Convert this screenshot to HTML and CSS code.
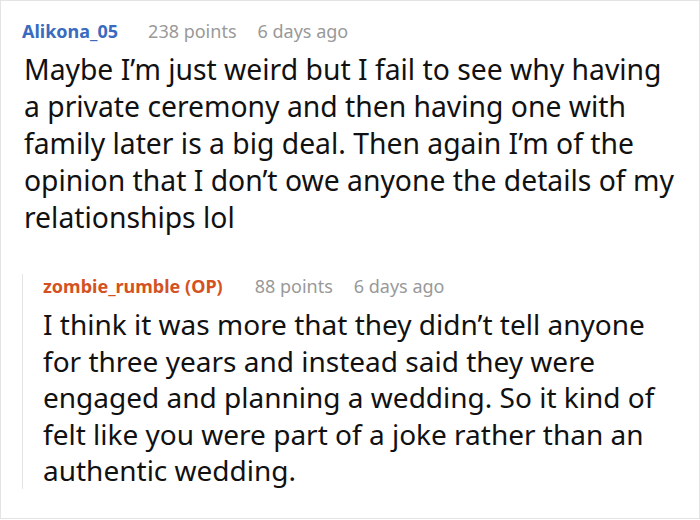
FILE: index.html
```html
<!DOCTYPE html>
<html>
<head>
<meta charset="utf-8">
<link rel="stylesheet" href="styles.css">
</head>
<body>
<div class="thread">
  <div class="comment">
    <div class="meta">
      <span class="author">Alikona_05</span>
      <span class="points">238 points</span>
      <span class="time">6 days ago</span>
    </div>
    <p class="text">Maybe I’m just weird but I fail to see why having<br>a private ceremony and then having one with<br>family later is a big deal. Then again I’m of the<br>opinion that I don’t owe anyone the details of my<br>relationships lol</p>
  </div>
  <div class="reply">
    <div class="meta">
      <span class="author op">zombie_rumble (OP)</span>
      <span class="points">88 points</span>
      <span class="time">6 days ago</span>
    </div>
    <p class="text">I think it was more that they didn’t tell anyone<br>for three years and instead said they were<br>engaged and planning a wedding. So it kind of<br>felt like you were part of a joke rather than an<br>authentic wedding.</p>
  </div>
</div>
</body>
</html>
```
FILE: styles.css
```css
html, body {
  margin: 0;
  padding: 0;
  background: #fff;
}
body {
  font-family: "Noto Sans", "Open Sans", sans-serif;
  width: 700px;
  height: 520px;
  overflow: hidden;
}
.thread {
  box-sizing: border-box;
  width: 700px;
  height: 519px;
  border: 1px solid #e4e4e4;
  padding: 18px 10px 0 21px;
}
.meta {
  display: flex;
  align-items: baseline;
  font-size: 18px;
  line-height: 24px;
  color: #999;
}
.author {
  font-weight: 700;
  color: #3a6bbf;
  margin-right: 30px;
}
.author.op {
  color: #d4521f;
  margin-right: 32px;
}
.points {
  margin-right: 21px;
}
.text {
  margin: 8px 0 0 2px;
  font-size: 28.3px;
  line-height: 37px;
  color: #111;
  white-space: nowrap;
}
.reply {
  margin-top: 38px;
  border-left: 1px solid #e4e4e4;
  padding-left: 20px;
}
.reply .text {
  margin-left: 0;
  font-size: 28px;
  line-height: 36.5px;
}
```
